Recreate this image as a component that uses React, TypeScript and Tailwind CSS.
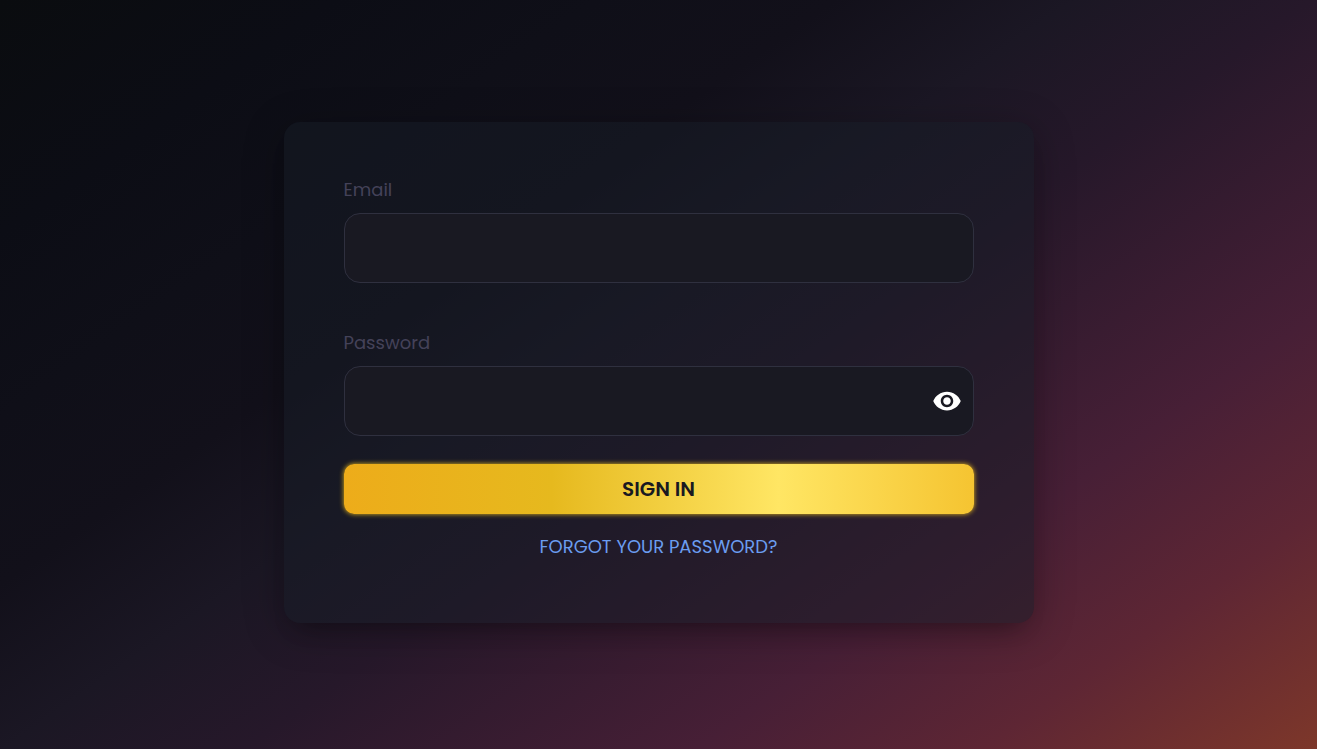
import { useState } from 'react';
import { MdVisibility, MdVisibilityOff } from 'react-icons/md';

const inputClass =
  'block w-full h-[70px] px-5 rounded-2xl border border-[#2f303f] bg-[#191922] text-lg text-white focus:outline-none focus:border-[#6b9df0] transition-colors';

export default function App() {
  const [showPassword, setShowPassword] = useState(false);

  return (
    <main className="flex min-h-screen items-center justify-center px-4 pb-1 font-[Poppins,Inter,sans-serif] bg-[linear-gradient(145deg,#0a0c0f_0%,#0c0d15_14%,#0f0f18_25%,#12101a_35%,#1b1724_45%,#26182a_55%,#471f36_74%,#5e2634_86%,#7d372a_100%)]">
      <form
        onSubmit={(e) => e.preventDefault()}
        className="w-full max-w-[750px] rounded-2xl bg-[#151b26]/50 px-[60px] pt-[54px] pb-16 shadow-[0_8px_40px_rgba(0,0,0,0.28),0_15px_25px_-15px_rgba(0,0,0,0.3)]"
      >
        <div className="mb-[46px]">
          <label htmlFor="email" className="block mb-2.5 text-[18px] leading-[27px] text-[#444259]">
            Email
          </label>
          <input id="email" type="email" className={inputClass} />
        </div>

        <div className="mb-7">
          <label htmlFor="password" className="block mb-2.5 text-[18px] leading-[27px] text-[#444259]">
            Password
          </label>
          <div className="relative">
            <input
              id="password"
              type={showPassword ? 'text' : 'password'}
              className={inputClass}
            />
            <button
              type="button"
              aria-label="Toggle password visibility"
              onClick={() => setShowPassword(!showPassword)}
              className="absolute inset-y-0 right-3 flex items-center text-white cursor-pointer"
            >
              {showPassword ? <MdVisibilityOff size={30} /> : <MdVisibility size={30} />}
            </button>
          </div>
        </div>

        <button
          type="submit"
          className="block w-full h-[50px] mb-5 rounded-[10px] text-[20px] font-semibold text-[#191921] cursor-pointer bg-[linear-gradient(90deg,#edac1a_0%,#e6b91e_33%,#ffe664_69%,#f5c431_100%)] shadow-[0_0_5px_#e6b91e]"
        >
          SIGN IN
        </button>

        <div className="text-center text-[18px] leading-[25px]">
          <a href="#forgot" className="text-[#6b9df0] hover:underline">
            FORGOT YOUR PASSWORD?
          </a>
        </div>
      </form>
    </main>
  );
}
